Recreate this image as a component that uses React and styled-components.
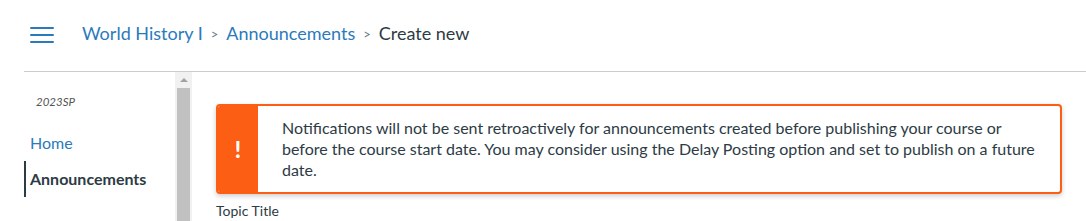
import React from 'react'
import styled, { createGlobalStyle } from 'styled-components'

const GlobalStyle = createGlobalStyle`
  html, body {
    margin: 0;
    padding: 0;
    background: #fff;
    font-family: Lato, "Noto Sans", "Liberation Sans", sans-serif;
    color: #2d3b45;
  }
`

const crumbs = [
  { label: 'World History I', link: true },
  { label: 'Announcements', link: true },
  { label: 'Create new', link: false },
]

const App = () => {
  return (
    <Page>
      <GlobalStyle />
      <Header>
        <Hamburger aria-label="menu">
          <span />
          <span />
          <span />
        </Hamburger>
        <Breadcrumbs>
          {crumbs.map((c, i) => (
            <React.Fragment key={c.label}>
              {i > 0 && <Separator>&gt;</Separator>}
              <Crumb $link={c.link}>{c.label}</Crumb>
            </React.Fragment>
          ))}
        </Breadcrumbs>
      </Header>
      <Body>
        <Sidebar>
          <Term>2023SP</Term>
          <NavItem>Home</NavItem>
          <NavItem $active>Announcements</NavItem>
        </Sidebar>
        <Scrollbar>
          <ScrollArrow />
          <ScrollThumb />
        </Scrollbar>
        <Main>
          <Alert>
            <AlertIcon>!</AlertIcon>
            <AlertText>
              Notifications will not be sent retroactively for announcements created before publishing your course or
              before the course start date. You may consider using the Delay Posting option and set to publish on a future
              date.
            </AlertText>
          </Alert>
          <FieldLabel>Topic Title</FieldLabel>
        </Main>
      </Body>
    </Page>
  )
}

export default App

const Page = styled.div`
  width: 1086px;
  height: 221px;
  overflow: hidden;
`

const Header = styled.header`
  height: 72px;
  margin-left: 24px;
  padding-left: 6px;
  display: flex;
  align-items: center;
  border-bottom: 1px solid #c7cdd1;
  box-sizing: border-box;
`

const Hamburger = styled.div`
  width: 24px;
  display: flex;
  flex-direction: column;
  gap: 5px;
  margin-bottom: 2px;
  span {
    display: block;
    height: 2px;
    background: #2b7abc;
    border-radius: 1px;
  }
`

const Breadcrumbs = styled.nav`
  display: flex;
  align-items: center;
  margin-left: 28px;
  margin-bottom: 5px;
  font-size: 18px;
`

const Crumb = styled.span`
  color: ${(p) => (p.$link ? '#2b7abc' : '#2d3b45')};
`

const Separator = styled.span`
  color: #6b7780;
  font-size: 13px;
  margin: 2px 8px 0 8px;
`

const Body = styled.div`
  display: flex;
  height: 149px;
`

const Sidebar = styled.aside`
  width: 151px;
  padding-left: 24px;
  padding-top: 23px;
`

const Term = styled.div`
  font-size: 11.5px;
  font-style: italic;
  color: #555;
  padding-left: 12px;
  margin-bottom: 17px;
`

const NavItem = styled.div`
  font-size: 16px;
  line-height: 20px;
  padding: 8px 0 8px 4px;
  border-left: 2px solid ${(p) => (p.$active ? '#2d3b45' : 'transparent')};
  color: ${(p) => (p.$active ? '#2d3b45' : '#2b7abc')};
  font-weight: ${(p) => (p.$active ? 700 : 400)};
`

const Scrollbar = styled.div`
  width: 17px;
  background: #f1f1f1;
  display: flex;
  flex-direction: column;
  align-items: center;
`

const ScrollArrow = styled.div`
  width: 0;
  height: 0;
  margin: 6px 0 6px;
  border-left: 4px solid transparent;
  border-right: 4px solid transparent;
  border-bottom: 4px solid #a3a3a3;
`

const ScrollThumb = styled.div`
  width: 13px;
  flex: 1;
  background: #c1c1c1;
`

const Main = styled.main`
  flex: 1;
  padding: 32px 24px 0 24px;
`

const Alert = styled.div`
  display: flex;
  border: 2px solid #fc5e13;
  border-radius: 4px;
  box-shadow: 0 2px 5px rgba(0, 0, 0, 0.2);
  background: #fff;
  overflow: hidden;
`

const AlertIcon = styled.div`
  width: 40px;
  background: #fc5e13;
  color: #fff;
  font-weight: 900;
  font-size: 22px;
  display: flex;
  align-items: center;
  justify-content: center;
  flex-shrink: 0;
`

const AlertText = styled.p`
  margin: 0;
  padding: 11px 16px 12px 24px;
  font-size: 16px;
  line-height: 21px;
  color: #2d3b45;
`

const FieldLabel = styled.div`
  font-size: 14px;
  margin-top: 8px;
  color: #2d3b45;
`
